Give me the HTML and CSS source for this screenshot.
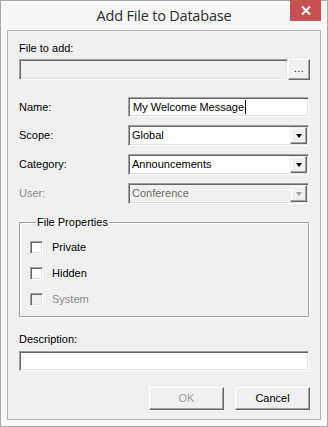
FILE: index.html
```html
<!DOCTYPE html>
<html>
<head>
<meta charset="utf-8">
<link rel="stylesheet" href="styles.css">
</head>
<body>
<div class="window">
  <div class="titlebar">
    <div class="title">Add File to Database</div>
    <div class="close"><svg width="10" height="9" viewBox="0 0 10 9"><path d="M1 0.5 L9 8.5 M9 0.5 L1 8.5" stroke="#fff" stroke-width="2"/></svg></div>
  </div>
  <div class="client">
    <div class="lbl">File to add:</div>
    <div class="file-row">
      <div class="tb tb-disabled path"></div>
      <div class="btn dots">...</div>
    </div>
    <div class="form">
      <div class="lbl row-lbl">Name:</div>
      <div class="tb name"><span class="val">My Welcome Message</span><span class="caret"></span></div>
      <div class="lbl row-lbl">Scope:</div>
      <div class="combo"><span class="val">Global</span><span class="drop"><span class="arrow"></span></span></div>
      <div class="lbl row-lbl">Category:</div>
      <div class="combo"><span class="val">Announcements</span><span class="drop"><span class="arrow"></span></span></div>
      <div class="lbl row-lbl muted">User:</div>
      <div class="combo combo-disabled"><span class="val">Conference</span><span class="drop"><span class="arrow"></span></span></div>
    </div>
    <fieldset class="group">
      <legend class="legend">File Properties</legend>
      <div class="check"><span class="box"></span><span class="lbl">Private</span></div>
      <div class="check"><span class="box"></span><span class="lbl">Hidden</span></div>
      <div class="check muted"><span class="box"></span><span class="lbl">System</span></div>
    </fieldset>
    <div class="lbl desc-lbl">Description:</div>
    <div class="tb desc"></div>
    <div class="buttons">
      <div class="btn pbtn btn-disabled">OK</div>
      <div class="btn pbtn">Cancel</div>
    </div>
  </div>
</div>
</body>
</html>
```
FILE: styles.css
```css
html, body {
  margin: 0;
  padding: 0;
}
body {
  width: 328px;
  height: 427px;
  overflow: hidden;
  font-family: "Liberation Sans", Arial, sans-serif;
  font-size: 11px;
  line-height: 13px;
  color: #000;
}
.window {
  box-sizing: border-box;
  width: 328px;
  height: 427px;
  border: 1px solid #a9a9a9;
  background: #f7f7f7;
  display: flex;
  flex-direction: column;
}
.titlebar {
  position: relative;
  height: 29px;
  flex: none;
}
.title {
  text-align: center;
  font-family: "Open Sans", "Noto Sans", sans-serif;
  font-size: 14.5px;
  line-height: 20px;
  padding-top: 5px;
  color: #2b2b2b;
  letter-spacing: -0.2px;
}
.close {
  position: absolute;
  top: -1px;
  right: 6px;
  width: 31px;
  height: 21px;
  background: #c75050;
  display: flex;
  align-items: center;
  justify-content: center;
}
.client {
  flex: 1;
  margin: 0 6px 6px 6px;
  border: 1px solid #b4b4b4;
  background: #f0f0f0;
  padding: 11px 11px 0 11px;
  display: flex;
  flex-direction: column;
}
.lbl {
  white-space: nowrap;
}
.muted, .muted .lbl {
  color: #8d8d8d;
}
/* sunken textbox */
.tb {
  box-sizing: border-box;
  height: 20px;
  background: #fff;
  border: 1px solid;
  border-color: #a0a0a0 #fff #fff #a0a0a0;
  box-shadow: inset 1px 1px 0 #696969, inset -1px -1px 0 #e3e3e3;
  display: flex;
  align-items: center;
  padding-left: 4px;
}
.tb-disabled {
  background: #f0f0f0;
}
/* raised button */
.btn {
  box-sizing: border-box;
  background: #f0f0f0;
  border: 1px solid;
  border-color: #fff #696969 #696969 #fff;
  box-shadow: inset -1px -1px 0 #a0a0a0, inset 1px 1px 0 #f0f0f0;
  display: flex;
  align-items: center;
  justify-content: center;
}
.file-row {
  display: flex;
  margin-top: 4px;
  margin-right: -1px;
  height: 21px;
}
.path {
  flex: 1;
  height: 21px;
}
.dots {
  width: 22px;
  height: 21px;
  margin-left: 0;
  padding-bottom: 2px;
  letter-spacing: 0.5px;
  color: #101060;
}
.form {
  display: grid;
  grid-template-columns: 109px 1fr;
  row-gap: 8px;
  margin-top: 17px;
  align-items: center;
}
.name {
  padding-left: 4px;
}
.caret {
  width: 1px;
  height: 14px;
  background: #000;
  margin-left: 1px;
}
.combo {
  box-sizing: border-box;
  height: 21px;
  background: #fff;
  border: 1px solid;
  border-color: #a0a0a0 #fff #fff #a0a0a0;
  box-shadow: inset 1px 1px 0 #696969, inset -1px -1px 0 #e3e3e3;
  display: flex;
  align-items: stretch;
  padding: 1px;
}
.combo .val {
  flex: 1;
  display: flex;
  align-items: center;
  padding-left: 2px;
}
.drop {
  box-sizing: border-box;
  width: 17px;
  background: #f0f0f0;
  border: 1px solid;
  border-color: #f0f0f0 #696969 #696969 #f0f0f0;
  box-shadow: inset -1px -1px 0 #a0a0a0, inset 1px 1px 0 #fff;
  display: flex;
  align-items: center;
  justify-content: center;
}
.arrow {
  width: 0;
  height: 0;
  border-left: 3.5px solid transparent;
  border-right: 3.5px solid transparent;
  border-top: 4px solid #000;
  margin-top: 1px;
}
.combo-disabled {
  background: #f0f0f0;
}
.combo-disabled .val {
  color: #6d6d6d;
}
.combo-disabled .arrow {
  border-top-color: #a0a0a0;
}
.group {
  margin: 12px 0 0 0;
  padding: 12px 0 10px 10px;
  border: 1px solid #a0a0a0;
  box-shadow: 1px 1px 0 #fff, inset 1px 1px 0 #fff;
  display: flex;
  flex-direction: column;
  gap: 13px;
  min-width: 0;
}
.legend {
  margin-left: 6px;
  padding: 0 1px;
  line-height: 13px;
}
.check {
  display: flex;
  align-items: center;
  height: 13px;
}
.box {
  box-sizing: border-box;
  width: 13px;
  height: 13px;
  background: #fff;
  border: 1px solid;
  border-color: #a0a0a0 #fff #fff #a0a0a0;
  box-shadow: inset 1px 1px 0 #696969, inset -1px -1px 0 #e3e3e3;
  margin-right: 9px;
}
.muted .box {
  background: #f0f0f0;
}
.desc-lbl {
  margin-top: 16px;
}
.desc {
  margin-top: 5px;
}
.buttons {
  display: flex;
  justify-content: flex-end;
  gap: 11px;
  margin-top: 16px;
  margin-right: -1px;
}
.pbtn {
  width: 75px;
  height: 23px;
}
.btn-disabled {
  color: #a0a0a0;
}
```
